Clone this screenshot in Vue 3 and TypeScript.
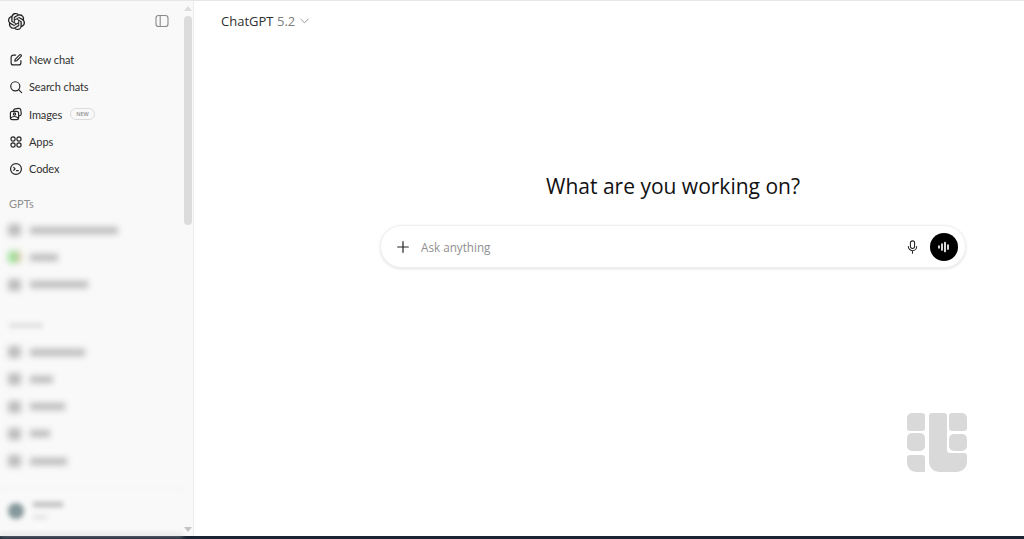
<script setup lang="ts">
interface NavItem {
  label: string
  icon: string
  badge?: string
}

const nav: NavItem[] = [
  { label: 'New chat', icon: 'edit' },
  { label: 'Search chats', icon: 'search' },
  { label: 'Images', icon: 'images', badge: 'NEW' },
  { label: 'Apps', icon: 'apps' },
  { label: 'Codex', icon: 'codex' },
]

// the reference has these rows blurred out, only the widths are readable
const gpts = [
  { w: 88, thumb: 'plain' },
  { w: 28, thumb: 'green' },
  { w: 58, thumb: 'plain' },
]
const projects = [55, 23, 35, 20, 37]
</script>

<template>
  <div class="page">
    <div class="app">
      <aside class="sidebar">
        <div class="side-content">
          <div class="side-top">
            <svg class="logo" viewBox="0 0 24 24" fill="#1a1a1a" stroke="#1a1a1a" stroke-width="0.25">
              <path d="M22.2819 9.8211a5.9847 5.9847 0 0 0-.5157-4.9108 6.0462 6.0462 0 0 0-6.5098-2.9A6.0651 6.0651 0 0 0 4.9807 4.1818a5.9847 5.9847 0 0 0-3.9977 2.9 6.0462 6.0462 0 0 0 .7427 7.0966 5.98 5.98 0 0 0 .511 4.9107 6.051 6.051 0 0 0 6.5146 2.9001A5.9847 5.9847 0 0 0 13.2599 24a6.0557 6.0557 0 0 0 5.7718-4.2058 5.9894 5.9894 0 0 0 3.9977-2.9001 6.0557 6.0557 0 0 0-.7475-7.0729zm-9.022 12.6081a4.4755 4.4755 0 0 1-2.8764-1.0408l.1419-.0804 4.7783-2.7582a.7948.7948 0 0 0 .3927-.6813v-6.7369l2.02 1.1686a.071.071 0 0 1 .038.052v5.5826a4.504 4.504 0 0 1-4.4945 4.4944zm-9.6607-4.1254a4.4708 4.4708 0 0 1-.5346-3.0137l.142.0852 4.783 2.7582a.7712.7712 0 0 0 .7806 0l5.8428-3.3685v2.3324a.0804.0804 0 0 1-.0332.0615L9.74 19.9502a4.4992 4.4992 0 0 1-6.1408-1.6464zM2.3408 7.8956a4.485 4.485 0 0 1 2.3655-1.9728V11.6a.7664.7664 0 0 0 .3879.6765l5.8144 3.3543-2.0201 1.1685a.0757.0757 0 0 1-.071 0l-4.8303-2.7865A4.504 4.504 0 0 1 2.3408 7.872zm16.5963 3.8558L13.1038 8.364 15.1192 7.2a.0757.0757 0 0 1 .071 0l4.8303 2.7913a4.4944 4.4944 0 0 1-.6765 8.1042v-5.6772a.79.79 0 0 0-.407-.667zm2.0107-3.0231l-.142-.0852-4.7735-2.7818a.7759.7759 0 0 0-.7854 0L9.409 9.2297V6.8974a.0662.0662 0 0 1 .0284-.0615l4.8303-2.7866a4.4992 4.4992 0 0 1 6.6802 4.66zM8.3065 12.863l-2.02-1.1638a.0804.0804 0 0 1-.038-.0567V6.0742a4.4992 4.4992 0 0 1 7.3757-3.4537l-.142.0805L8.704 5.459a.7948.7948 0 0 0-.3927.6813zm1.0976-2.3654l2.602-1.4998 2.6069 1.4998v2.9994l-2.5974 1.4997-2.6067-1.4997Z" />
            </svg>
            <svg class="toggle" viewBox="0 0 14 14" fill="none" stroke="#8a8a8a" stroke-width="1.1">
              <rect x="1" y="1.5" width="12" height="11" rx="2.6" />
              <path d="M5.2 1.5v11" />
            </svg>
          </div>

          <nav class="nav">
            <div v-for="item in nav" :key="item.label" class="nav-row">
              <svg class="nav-icon" viewBox="0 0 16 16" fill="none" stroke="#262626" stroke-width="1.35" stroke-linecap="round" stroke-linejoin="round">
                <template v-if="item.icon === 'edit'">
                  <path d="M7.6 2.4H5a2.6 2.6 0 0 0-2.6 2.6v6A2.6 2.6 0 0 0 5 13.6h6a2.6 2.6 0 0 0 2.6-2.6V8.6" />
                  <path d="M6.6 9.4l.5-2.2 5-5a1.2 1.2 0 0 1 1.7 1.7l-5 5z" />
                </template>
                <template v-else-if="item.icon === 'search'">
                  <circle cx="7.2" cy="7.2" r="5.2" />
                  <path d="M11 11l3.4 3.4" />
                </template>
                <template v-else-if="item.icon === 'images'">
                  <rect x="1.6" y="5" width="9.4" height="9.4" rx="2.2" />
                  <path d="M5.2 5V4.2A2.2 2.2 0 0 1 7 2.2l4-.6a2.2 2.2 0 0 1 2.5 1.9l.5 4.2A2.2 2.2 0 0 1 12.2 10l-1.2.2" />
                  <circle cx="6.3" cy="8" r="1.3" />
                  <path d="M2 12.4C4 10.4 8 10.2 10.8 12.8" />
                </template>
                <template v-else-if="item.icon === 'apps'">
                  <circle cx="4.6" cy="4.6" r="2.4" />
                  <circle cx="11.4" cy="4.6" r="2.4" />
                  <circle cx="4.6" cy="11.4" r="2.4" />
                  <circle cx="11.4" cy="11.4" r="2.4" />
                </template>
                <template v-else>
                  <circle cx="8" cy="8" r="6.2" />
                  <path d="M5.4 6.2L7 7.8 5.4 9.4" />
                  <path d="M8.6 9.8h2" />
                </template>
              </svg>
              <span class="nav-label">{{ item.label }}</span>
              <span v-if="item.badge" class="badge">{{ item.badge }}</span>
            </div>
          </nav>

          <div class="section-label">GPTs</div>
          <div class="blur-list">
            <div v-for="(g, i) in gpts" :key="i" class="blur-row">
              <span class="blur-thumb" :class="g.thumb" />
              <span class="blur-text" :style="{ width: g.w + 'px' }" />
            </div>
          </div>

          <div class="blur-heading" />
          <div class="blur-list projects">
            <div v-for="(w, i) in projects" :key="i" class="blur-row">
              <span class="blur-thumb plain" />
              <span class="blur-text" :style="{ width: w + 'px' }" />
            </div>
          </div>

          <div class="account">
            <span class="avatar" />
            <div class="account-lines">
              <span class="line-a" />
              <span class="line-b" />
            </div>
          </div>
        </div>

        <div class="scrollbar">
          <span class="arrow up" />
          <span class="thumb" />
          <span class="arrow down" />
        </div>
      </aside>

      <main class="main">
        <header class="header">
          <span class="brand">ChatGPT</span>
          <span class="version">5.2</span>
          <svg class="chev" viewBox="0 0 10 6" fill="none" stroke="#8a8a8a" stroke-width="1" stroke-linecap="round" stroke-linejoin="round">
            <path d="M1 1l4 4 4-4" />
          </svg>
        </header>

        <div class="center">
          <h1 class="title">What are you working on?</h1>
          <div class="composer">
            <svg class="plus" viewBox="0 0 12 12" stroke="#222" stroke-width="1.2" stroke-linecap="round">
              <path d="M6 .7v10.6M.7 6h10.6" />
            </svg>
            <span class="placeholder">Ask anything</span>
            <svg class="mic" viewBox="0 0 12 16" fill="none" stroke="#222" stroke-width="1.2" stroke-linecap="round">
              <rect x="3.6" y="1" width="4.8" height="8.6" rx="2.4" />
              <path d="M1.2 7.4a4.8 4.8 0 0 0 9.6 0M6 12.2V15" />
            </svg>
            <span class="voice">
              <svg viewBox="0 0 14 14" fill="none" stroke="#fff" stroke-width="1.7" stroke-linecap="round">
                <path d="M2 6.2v1.6M5 4v6M8 2.5v9M11 5v4" />
              </svg>
            </span>
          </div>
        </div>

        <svg class="watermark" viewBox="0 0 60 59" fill="#d9d9d9">
          <path d="M0 5a5 5 0 0 1 5-5h10a3 3 0 0 1 3 3v12a3 3 0 0 1-3 3H3a3 3 0 0 1-3-3z" />
          <rect x="0" y="20" width="18" height="18" rx="5" />
          <path d="M3 42h12a3 3 0 0 1 3 3v14H9a9 9 0 0 1-9-9v-5a3 3 0 0 1 3-3z" />
          <path d="M25 0h12a3 3 0 0 1 3 3v34a3 3 0 0 0 3 3h14a3 3 0 0 1 3 3v6a10 10 0 0 1-10 10H32a10 10 0 0 1-10-10V3a3 3 0 0 1 3-3z" />
          <path d="M42 3a3 3 0 0 1 3-3h10a5 5 0 0 1 5 5v10a3 3 0 0 1-3 3H45a3 3 0 0 1-3-3z" />
          <rect x="42" y="21" width="18" height="17" rx="5" />
        </svg>
      </main>
    </div>
    <div class="taskbar" />
  </div>
</template>

<style>
html,
body {
  margin: 0;
  background: #fff;
}
</style>

<style scoped>
.page {
  width: 1024px;
  height: 539px;
  display: flex;
  flex-direction: column;
  overflow: hidden;
  border-top: 1px solid #e6e6e6;
  box-sizing: border-box;
  font-family: "Open Sans", "Noto Sans", sans-serif;
  color: #0d0d0d;
}
.app {
  flex: 1;
  min-height: 0;
  display: flex;
}
.taskbar {
  height: 3px;
  background: #1a2433;
}

/* sidebar */
.sidebar {
  width: 194px;
  flex: none;
  display: flex;
  background: #f9f9f9;
  border-right: 1px solid #ececec;
  box-sizing: border-box;
}
.side-content {
  flex: 1;
  min-width: 0;
  padding: 0 0 0 9px;
  display: flex;
  flex-direction: column;
}
.side-top {
  height: 40px;
  display: flex;
  align-items: center;
  justify-content: space-between;
  padding-right: 14px;
}
.logo {
  width: 17px;
  height: 17px;
  margin-left: -1px;
}
.toggle {
  width: 14px;
  height: 14px;
}
.nav {
  margin-top: 5px;
  display: flex;
  flex-direction: column;
}
.nav-row {
  height: 27.3px;
  display: flex;
  align-items: center;
  gap: 6px;
}
.nav-icon {
  width: 14px;
  height: 14px;
  flex: none;
}
.nav-label {
  font-family: Lato, "Open Sans", sans-serif;
  font-size: 11px;
  letter-spacing: -0.1px;
  color: #303030;
}
.badge {
  margin-left: 2px;
  height: 10px;
  padding: 0 5px;
  border: 1px solid #dcdcdc;
  border-radius: 7px;
  font-size: 5.5px;
  font-weight: 600;
  line-height: 10px;
  color: #8f8f8f;
}
.section-label {
  margin-top: 14px;
  height: 16px;
  line-height: 16px;
  font-family: Lato, "Open Sans", sans-serif;
  font-size: 11px;
  color: #8f8f8f;
}
.blur-list {
  margin-top: 4px;
  display: flex;
  flex-direction: column;
  filter: blur(3px);
}
.blur-list.projects {
  margin-top: 10px;
}
.blur-row {
  height: 27.3px;
  display: flex;
  align-items: center;
  gap: 9px;
  margin-left: -1px;
}
.blur-thumb {
  width: 13px;
  height: 12px;
  border-radius: 3px;
  flex: none;
}
.blur-thumb.plain {
  background: #bcbcbc;
}
.blur-thumb.green {
  background: linear-gradient(90deg, #9fe09a 0 55%, #e8b8a0 100%);
}
.blur-text {
  height: 7px;
  background: #bababa;
}
.blur-heading {
  margin-top: 25px;
  width: 34px;
  height: 5px;
  background: #e0e0e0;
  filter: blur(2.4px);
}
.account {
  margin-top: 13px;
  padding-top: 13px;
  margin-left: -9px;
  padding-left: 8px;
  display: flex;
  gap: 9px;
  align-items: flex-start;
  border-top: 1px solid #f1f1f1;
  filter: blur(2.4px);
  flex: 1;
  align-self: stretch;
  border-bottom: 2px solid #cfcfcf;
}
.avatar {
  width: 16px;
  height: 16px;
  border-radius: 50%;
  background: #84979a;
  margin-top: 1px;
}
.account-lines {
  display: flex;
  flex-direction: column;
  gap: 8px;
}
.line-a {
  width: 30px;
  height: 5px;
  background: #bcbcbc;
}
.line-b {
  width: 14px;
  height: 4px;
  background: #e2e2e2;
}
.scrollbar {
  width: 9px;
  margin-right: 1px;
  flex: none;
  display: flex;
  flex-direction: column;
  align-items: center;
}
.arrow {
  width: 0;
  height: 0;
  border-left: 4px solid transparent;
  border-right: 4px solid transparent;
}
.arrow.up {
  margin-top: 5px;
  border-bottom: 5px solid #dcdcdc;
}
.arrow.down {
  margin-bottom: 4px;
  border-top: 5px solid #c4c4c4;
}
.thumb {
  margin-top: 5px;
  margin-bottom: auto;
  width: 8px;
  height: 209px;
  border-radius: 4px;
  background: #dcdcdc;
}

/* main */
.main {
  flex: 1;
  min-width: 0;
  position: relative;
  display: flex;
  flex-direction: column;
  background: #fff;
}
.header {
  height: 40px;
  padding-left: 27px;
  display: flex;
  align-items: center;
  gap: 3.5px;
  font-size: 13px;
}
.brand {
  color: #303030;
}
.version {
  color: #7d7d7d;
}
.chev {
  width: 9px;
  height: 6px;
  margin-left: 1px;
}
.center {
  padding-left: 128px;
  display: flex;
  flex-direction: column;
  align-items: center;
}
.title {
  margin: 129px 0 0;
  font-size: 21px;
  line-height: 32px;
  font-weight: 400;
  color: #111;
}
.composer {
  margin-top: 23px;
  width: 586px;
  height: 43px;
  box-sizing: border-box;
  padding: 0 7px 0 16px;
  display: flex;
  align-items: center;
  border-radius: 22px;
  background: #fff;
  border: 1px solid #f0f0f0;
  box-shadow: 0 1px 3px rgba(0, 0, 0, 0.12);
}
.plus {
  width: 12px;
  height: 12px;
  flex: none;
}
.placeholder {
  margin-left: 12px;
  flex: 1;
  font-size: 11.7px;
  color: #8f8f8f;
}
.mic {
  width: 11px;
  height: 14px;
  flex: none;
  margin-right: 12px;
}
.voice {
  width: 28px;
  height: 28px;
  flex: none;
  border-radius: 50%;
  background: #000;
  display: flex;
  align-items: center;
  justify-content: center;
}
.voice svg {
  width: 14px;
  height: 14px;
}
.watermark {
  position: absolute;
  left: 713px;
  top: 412px;
  width: 60px;
  height: 59px;
  filter: blur(0.5px);
}
</style>
